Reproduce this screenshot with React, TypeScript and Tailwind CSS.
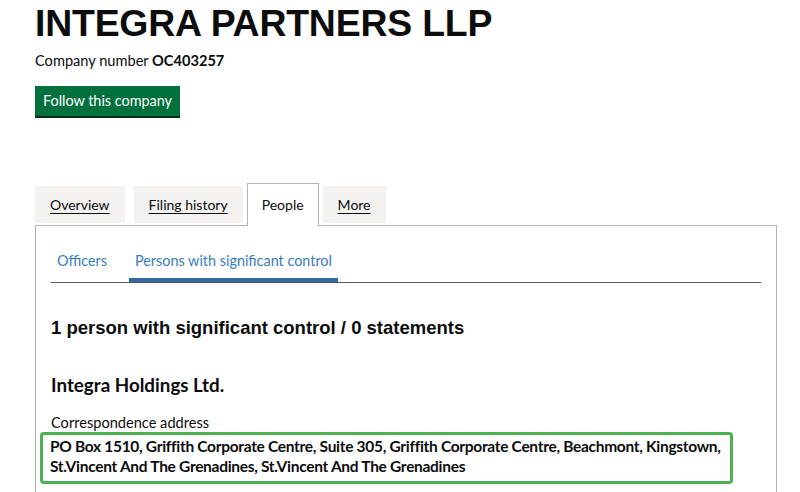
export default function App() {
  const tabs = [
    { label: "Overview", active: false },
    { label: "Filing history", active: false },
    { label: "People", active: true },
    { label: "More", active: false },
  ];

  return (
    <div className="w-[800px] h-[492px] overflow-hidden bg-white text-[#0b0c0c] font-['Lato',sans-serif]">
      <div className="pl-[35px]">
        <h1 className="pt-[1px] text-[37.4px] leading-[44px] font-bold font-['Liberation_Sans',Arial,sans-serif] tracking-[-0.2px]">
          INTEGRA PARTNERS LLP
        </h1>
        <p className="mt-[6px] text-[14.6px] leading-[20px]">
          Company number <strong className="font-bold">OC403257</strong>
        </p>
        <button
          type="button"
          className="mt-[15px] h-[30px] px-[8px] bg-[#00703c] text-white text-[14.4px] leading-[30px] shadow-[0_2px_0_#002d18]"
        >
          Follow this company
        </button>

        {/* tabs */}
        <div className="mt-[67px] flex items-end gap-[4px]">
          {tabs.map((t) =>
            t.active ? (
              <div
                key={t.label}
                className="relative z-10 -mb-[1px] h-[43px] px-[14px] border border-b-0 border-[#b1b4b6] bg-white text-[14px] leading-[42px]"
              >
                {t.label}
              </div>
            ) : (
              <div
                key={t.label}
                className={`mb-[2px] h-[37px] px-[15px] bg-[#f3f2f1] text-[14px] leading-[37px] underline underline-offset-[3px] ${t.label === "Filing history" ? "ml-[5px]" : ""}`}
              >
                {t.label}
              </div>
            )
          )}
        </div>

        {/* panel */}
        <div className="w-[742px] h-[300px] border border-[#b1b4b6] px-[15px]">
          <div className="mt-[21px] flex border-b border-[#505a5f] w-[710px]">
            <div className="px-[6px] pb-[8px] text-[14.4px] leading-[27px] text-[#1d70b8] opacity-90">
              Officers
            </div>
            <div className="ml-[16px] px-[6px] pb-[4px] border-b-[4px] border-[#1d5a9b] text-[14.4px] leading-[27px] text-[#1d70b8] opacity-90">
              Persons with significant control
            </div>
          </div>

          <h2 className="mt-[33px] text-[18.5px] leading-[24px] font-bold font-['Liberation_Sans',Arial,sans-serif]">
            1 person with significant control / 0 statements
          </h2>

          <h3 className="mt-[33px] text-[18.8px] leading-[24px] font-bold">
            Integra Holdings Ltd.
          </h3>

          <p className="mt-[16px] text-[14.6px] leading-[20px]">Correspondence address</p>
          <div className="-ml-[11px] -mt-[1px] w-[693px] rounded-[4px] border-[3px] border-[#4caf50] pl-[7px] pr-[4px] pt-[1px] pb-[5px]">
            <p className="text-[15.5px] leading-[20px] font-bold tracking-[-0.3px]">
              PO Box 1510, Griffith Corporate Centre, Suite 305, Griffith Corporate Centre, Beachmont, Kingstown,
              <br />
              St.Vincent And The Grenadines, St.Vincent And The Grenadines
            </p>
          </div>
        </div>
      </div>
    </div>
  );
}
